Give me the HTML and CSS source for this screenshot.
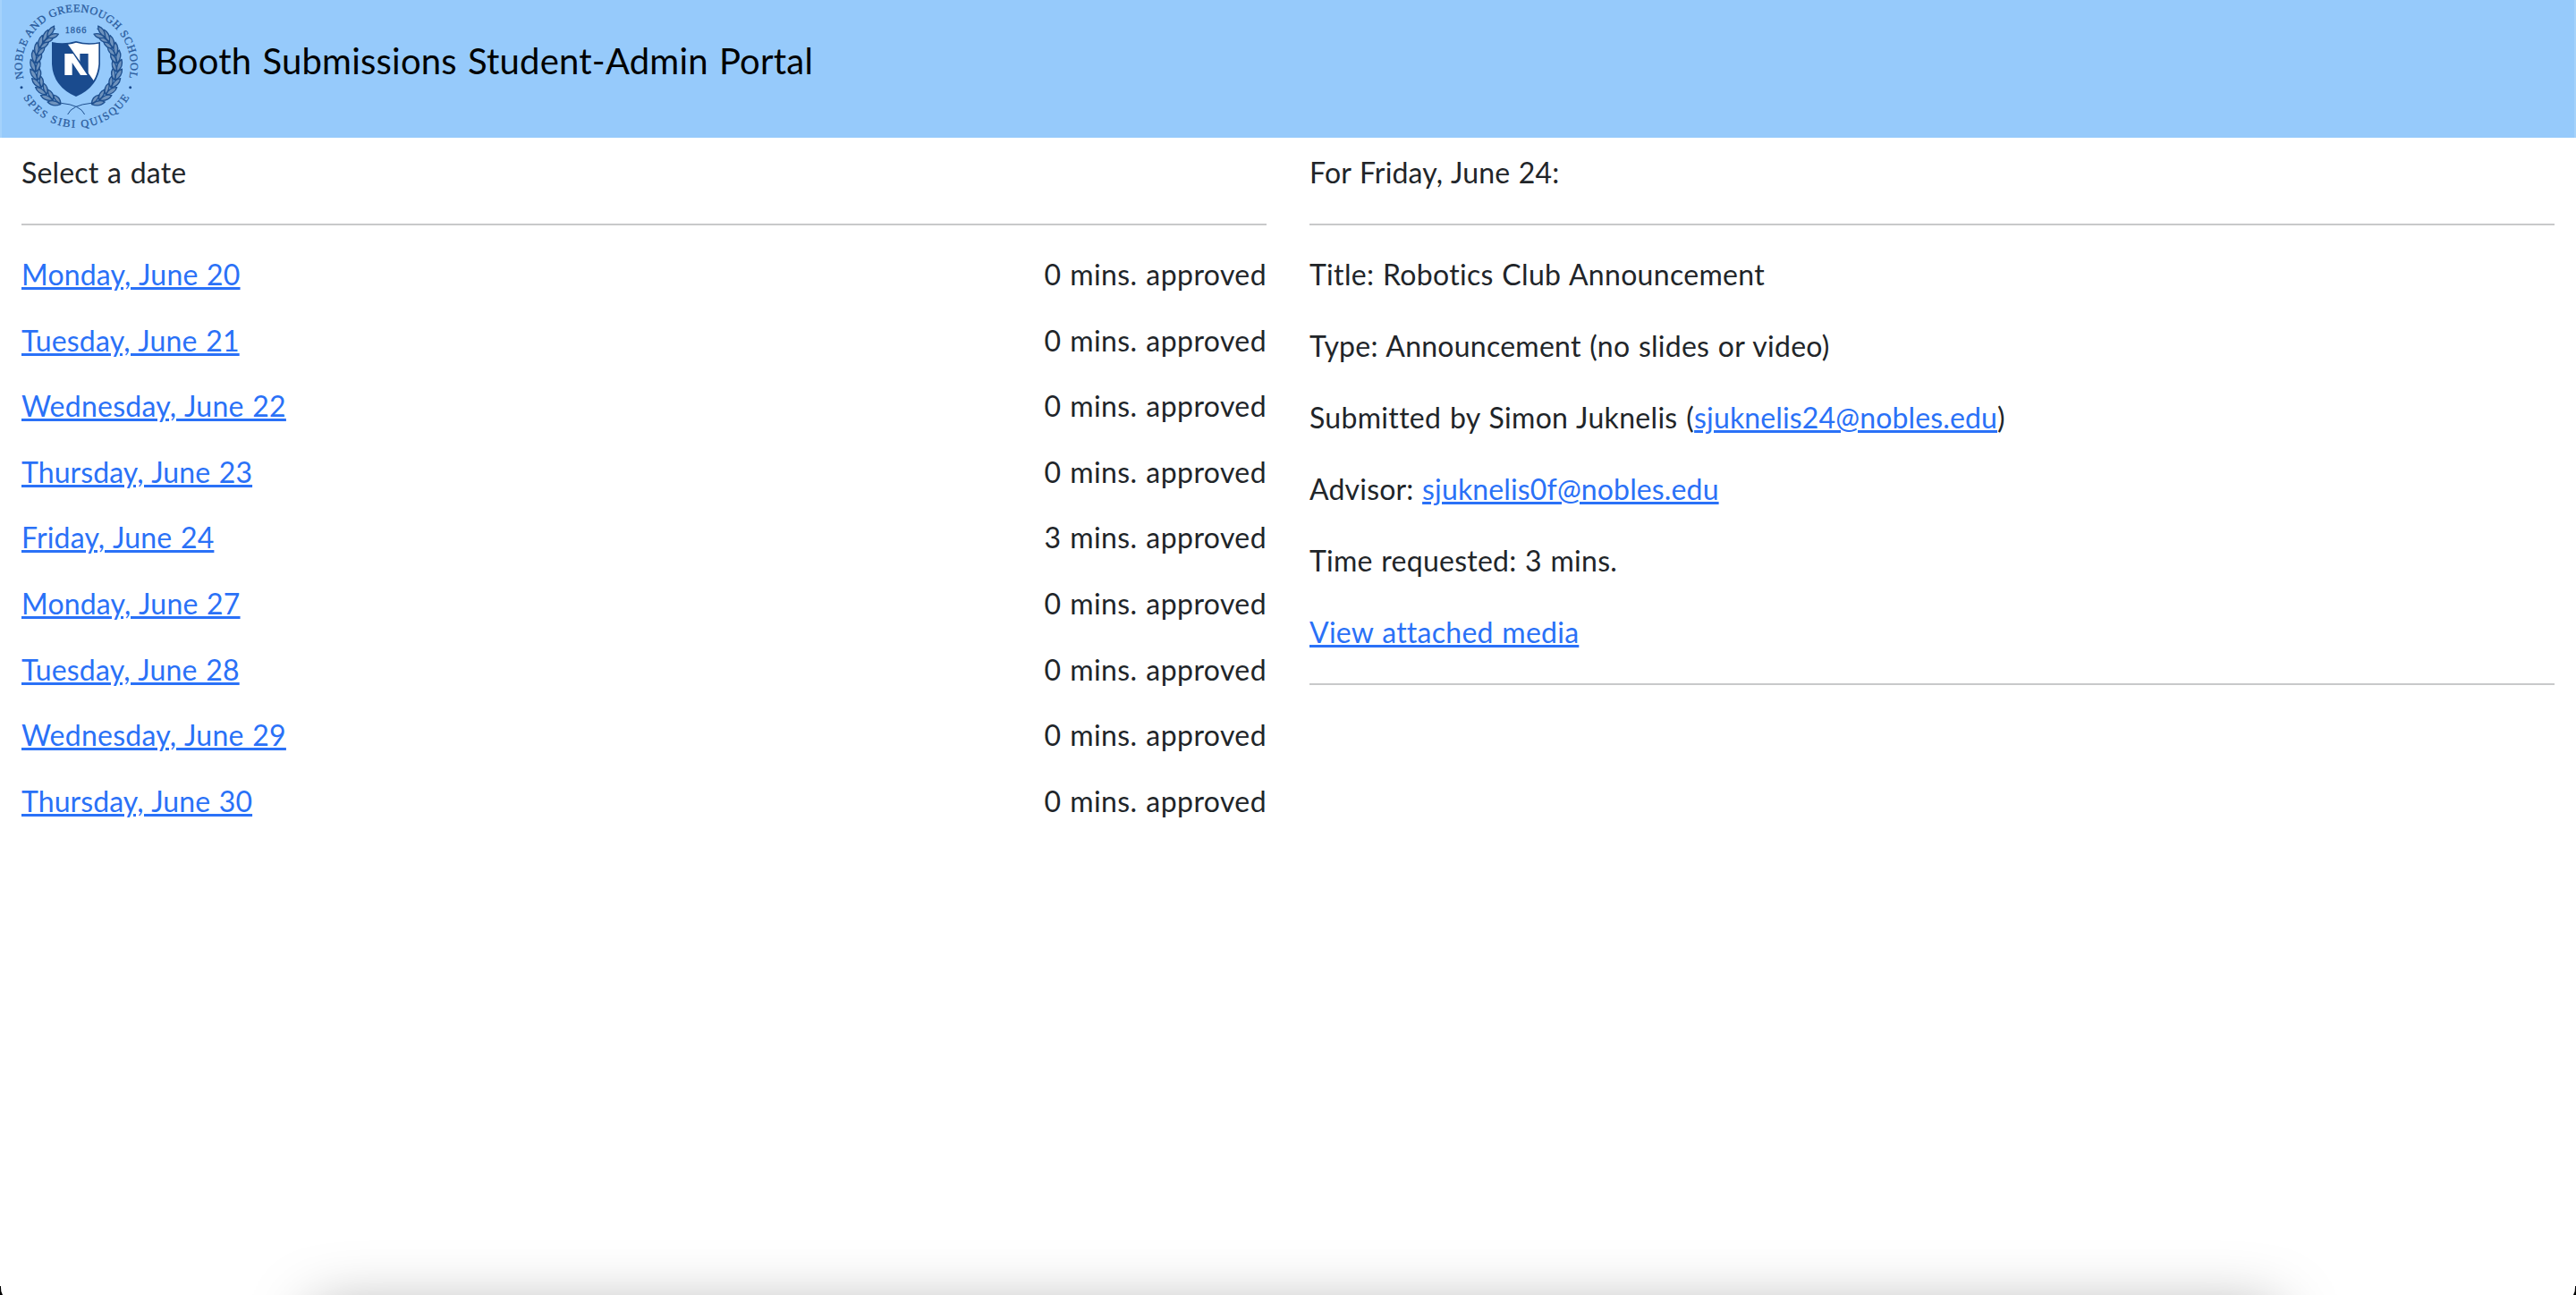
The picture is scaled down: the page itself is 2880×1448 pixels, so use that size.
FILE: index.html
```html
<!DOCTYPE html>
<html lang="en">
<head>
<meta charset="utf-8">
<title>Booth Submissions</title>
<link rel="stylesheet" href="styles.css">
</head>
<body>
<header class="topbar">
  <svg class="crest" viewBox="0 0 510 462" role="img" aria-label="School crest">
    <defs>
      <path id="arc-top" d="M79 264 A182 182 0 1 1 433 264"/>
      <path id="arc-bottom" d="M78 327 A207 207 0 0 0 434 327"/>
      <g id="sprig">
        <path d="M118 236 Q96 218 104 194 Q124 208 118 236Z"/>
        <path d="M120 236 Q117 212 134 200 Q141 222 120 236Z"/>
      </g>
      <g id="branch">
        <path class="stem" d="M200 350 A139 139 0 0 1 186 96"/>
        <use href="#sprig" transform="rotate(-62 255 222)"/>
        <use href="#sprig" transform="rotate(-50 255 222)"/>
        <use href="#sprig" transform="rotate(-38 255 222)"/>
        <use href="#sprig" transform="rotate(-26 255 222)"/>
        <use href="#sprig" transform="rotate(-14 255 222)"/>
        <use href="#sprig" transform="rotate(-2 255 222)"/>
        <use href="#sprig" transform="rotate(10 255 222)"/>
        <use href="#sprig" transform="rotate(21 255 222)"/>
        <use href="#sprig" transform="rotate(32 255 222)"/>
        <use href="#sprig" transform="rotate(42 255 222)"/>
        <use href="#sprig" transform="rotate(51 255 222)"/>
        <path class="stem" d="M205 346 Q270 352 284 384"/>
      </g>
    </defs>
    <text class="motto" textLength="654"><textPath href="#arc-top" textLength="654">NOBLE AND GREENOUGH SCHOOL</textPath></text>
    <text class="motto" textLength="428"><textPath href="#arc-bottom" textLength="428">SPES SIBI QUISQUE</textPath></text>
    <circle class="ink" cx="72" cy="293" r="4.5"/>
    <circle class="ink" cx="437" cy="293" r="4.5"/>
    <text class="year" x="218" y="110" textLength="71">1866</text>
    <use href="#branch" class="laurel"/>
    <use href="#branch" class="laurel" transform="matrix(-1 0 0 1 511 0)"/>
    <path class="ink" d="M174 141 Q215 150 255 138 Q295 150 336 141 V215 Q332 290 255 324 Q178 290 174 215Z"/>
    <path class="paper" d="M228 149 Q243 147 255 143 Q292 154 331 146 V215 Q328 246 314 270Z"/>
    <path class="paper" d="M217 180 H245 L293 252 H270 L242 210 V252 H217Z"/>
    <path class="ink" d="M268 180 H296 V250 L268 208Z"/>
  </svg>
  <h1 class="portal-title">Booth Submissions Student-Admin Portal</h1>
</header>
<main class="columns">
  <section class="column">
    <p class="line">Select a date</p>
    <hr>
    <ul class="dates">
      <li class="line"><a href="#">Monday, June 20</a><span class="mins">0 mins. approved</span></li>
      <li class="line"><a href="#">Tuesday, June 21</a><span class="mins">0 mins. approved</span></li>
      <li class="line"><a href="#" class="wide-1">Wednesday, June 22</a><span class="mins">0 mins. approved</span></li>
      <li class="line"><a href="#" class="tight">Thursday, June 23</a><span class="mins">0 mins. approved</span></li>
      <li class="line"><a href="#">Friday, June 24</a><span class="mins">3 mins. approved</span></li>
      <li class="line"><a href="#">Monday, June 27</a><span class="mins">0 mins. approved</span></li>
      <li class="line"><a href="#">Tuesday, June 28</a><span class="mins">0 mins. approved</span></li>
      <li class="line"><a href="#" class="wide-1">Wednesday, June 29</a><span class="mins">0 mins. approved</span></li>
      <li class="line"><a href="#" class="tight">Thursday, June 30</a><span class="mins">0 mins. approved</span></li>
    </ul>
  </section>
  <section class="column">
    <p class="line">For Friday, June 24:</p>
    <hr>
    <div class="details">
      <p class="line wide-2">Title: Robotics Club Announcement</p>
      <p class="line wide-1">Type: Announcement (no slides or video)</p>
      <p class="line wide-2">Submitted by Simon Juknelis (<a href="#" class="email">sjuknelis24@nobles.edu</a>)</p>
      <p class="line">Advisor: <a href="#" class="email">sjuknelis0f@nobles.edu</a></p>
      <p class="line wide-1">Time requested: 3 mins.</p>
      <p class="line wide-1"><a href="#">View attached media</a></p>
    </div>
    <hr>
  </section>
</main>
<div class="dock"><div class="dock-shadow"></div></div>
<div class="corner corner-left"></div>
<div class="corner corner-right"></div>
</body>
</html>
```
FILE: styles.css
```css
* { box-sizing: border-box; }

body {
  margin: 0;
  height: 1448px;
  overflow: hidden;
  position: relative;
  background: #fff;
  color: #212529;
  font: 32px/44px Lato, "Liberation Sans", sans-serif;
  font-variant-ligatures: none;
  letter-spacing: 0.18px;
  word-spacing: 1.2px;
}

p, ul, h1, hr { margin: 0; padding: 0; }
a { color: #2a71f7; text-decoration: underline 3px; text-underline-offset: 2px; }

.topbar {
  display: flex;
  height: 154px;
  background: #96cafb;
  border: solid #a5d2fb;
  border-width: 0 2px;
}
.crest { width: 170px; height: 154px; flex: none; margin-left: -2px; }
.portal-title {
  padding: 38px 0 0 3px;
  color: #000;
  font-size: 40px;
  font-weight: 400;
  line-height: 60px;
  letter-spacing: 0.22px;
  word-spacing: 1.6px;
}

.ink { fill: #1a4b8e; }
.paper { fill: #fff; }
.motto, .year {
  fill: #2a5c9e;
  stroke: #2a5c9e;
  stroke-width: 0.9;
  font-family: "Liberation Serif", serif;
  letter-spacing: 0;
  word-spacing: 0;
}
.motto { font-size: 37px; }
.year { font-size: 31px; }
.laurel { fill: #6f93bd; stroke: #1f508f; stroke-width: 4; stroke-linejoin: round; }
.stem { fill: none; stroke-width: 3; }

.columns { display: grid; grid-template-columns: 1fr 1fr; }
.column { padding: 16px 24px 0; }
.line { padding: 1px 0 3px; }
hr { height: 2px; border: 0; background: #c8c9ca; margin: 32px 0; }

.dates { display: flex; flex-direction: column; gap: 25.6px; list-style: none; }
.dates .line { display: flex; justify-content: space-between; }
.details { display: flex; flex-direction: column; gap: 32px; }

.mins { letter-spacing: 0.41px; }
.tight { letter-spacing: 0.1px; }
.wide-1 { letter-spacing: 0.25px; }
.wide-2 { letter-spacing: 0.31px; }
.email { letter-spacing: 0.14px; }

.dock {
  position: absolute;
  inset: auto 0 0 0;
  height: 110px;
  overflow: hidden;
  pointer-events: none;
}
.dock-shadow {
  position: absolute;
  left: 350px;
  right: 335px;
  top: 127px;
  height: 200px;
  box-shadow: 0 0 70px rgba(0, 0, 0, 0.35);
}
.corner { position: absolute; bottom: 0; width: 3px; height: 10px; background: #000; }
.corner-left { left: 0; clip-path: polygon(0 0, 30% 0, 45% 60%, 100% 100%, 0 100%); }
.corner-right { right: 0; clip-path: polygon(100% 0, 70% 0, 55% 60%, 0 100%, 100% 100%); }
```
